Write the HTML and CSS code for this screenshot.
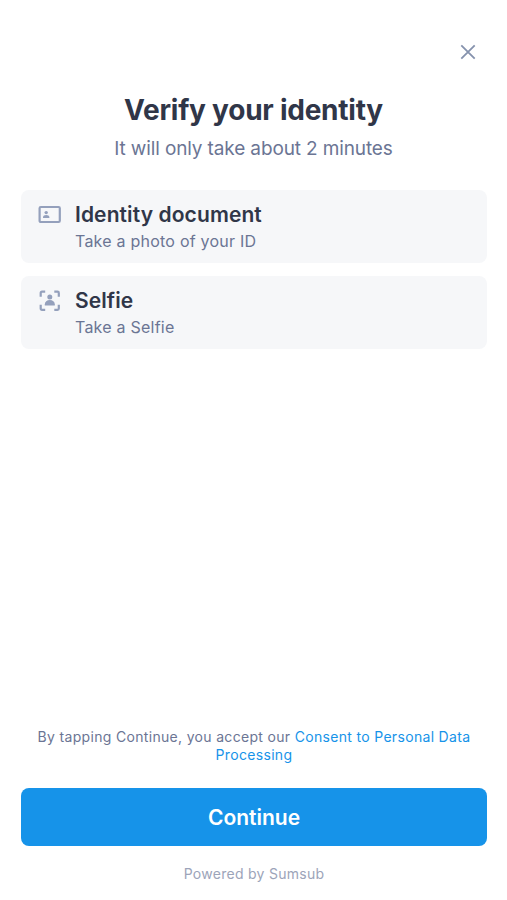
FILE: index.html
```html
<!DOCTYPE html>
<html lang="en">
<head>
<meta charset="utf-8">
<title>Verify your identity</title>
<link rel="stylesheet" href="styles.css">
</head>
<body>
<main class="screen">
  <header class="top">
    <button class="close" aria-label="Close"><svg width="16" height="16" viewBox="0 0 16 16"><path d="M1.300 1.300l13.400 13.400M14.700 1.300l-13.400 13.400"/></svg></button>
  </header>
  <h1 class="title">Verify your identity</h1>
  <p class="subtitle">It will only take about 2 minutes</p>
  <ul class="steps">
    <li class="step">
      <svg class="icon" width="24" height="24" viewBox="0 0 24 24"><rect class="line" x="1.600" y="4" width="20.200" height="15" rx="1.200"/><circle cx="8.200" cy="9.600" r="1.700"/><path d="M5 15v-.6c0-1.500 1.500-2.300 3.200-2.300s3.200.8 3.200 2.300v.6z"/></svg>
      <div><h2 class="name">Identity document</h2><p class="hint">Take a photo of your ID</p></div>
    </li>
    <li class="step">
      <svg class="icon" width="24" height="24" viewBox="0 0 24 24"><path class="line" d="M2.700 7.700V4Q2.700 2.700 4 2.700h3.200M16.300 2.700h3.200Q20.800 2.700 20.800 4v3.700M20.800 15.800v3.700Q20.800 20.800 19.500 20.800h-3.200M7.200 20.800H4Q2.700 20.800 2.700 19.500v-3.700"/><circle cx="11.800" cy="8" r="2.500"/><path d="M6.800 16.500v-1.200c0-2.600 2.200-4.200 5-4.200s5 1.600 5 4.200v1.200z"/></svg>
      <div><h2 class="name">Selfie</h2><p class="hint">Take a Selfie</p></div>
    </li>
  </ul>
  <footer class="bottom">
    <p class="consent">By tapping Continue, you accept our <a>Consent to Personal Data<br>Processing</a></p>
    <button class="continue">Continue</button>
    <p class="powered">Powered by Sumsub</p>
  </footer>
</main>
</body>
</html>
```
FILE: styles.css
```css
* { box-sizing: border-box; margin: 0; padding: 0; }
body { background: #fff; font-family: Inter, sans-serif; }
.screen { height: 900px; padding: 40px 20px 0 21px; display: flex; flex-direction: column; }
.top { display: flex; justify-content: flex-end; height: 24px; }
.close { width: 24px; height: 24px; margin-right: 7px; border: 0; background: none; display: grid; place-items: center; }
.close path { stroke: #8592ad; stroke-width: 1.8; }
.title { margin: 28px 1px 0 0; font-size: 28px; line-height: 36px; font-weight: 700; letter-spacing: -0.24px; text-align: center; color: #303648; }
.subtitle { margin: 8px 1px 0 0; font-size: 19px; line-height: 26px; letter-spacing: -0.13px; text-align: center; color: #6b7594; }
.steps { list-style: none; display: grid; gap: 13px; margin-top: 28px; }
.step { display: flex; gap: 13px; height: 73px; padding: 12px 17px; border-radius: 8px; background: #f6f7f9; }
.icon { flex: none; margin-top: 1px; color: #94a0bc; fill: currentColor; }
.line { fill: none; stroke: currentColor; stroke-width: 2.2; }
.name { font-size: 21px; line-height: 26px; font-weight: 600; letter-spacing: 0.1px; color: #303648; }
.hint { margin-top: 0.5px; font-size: 16px; line-height: 24px; letter-spacing: 0.23px; color: #6b7594; }
.bottom { margin-top: auto; text-align: center; padding-bottom: 16px; }
.consent { font-size: 14px; line-height: 18px; letter-spacing: 0.32px; color: #6b7594; }
.consent a { color: #1693e9; }
.continue { display: block; width: 100%; height: 58px; margin-top: 24px; border: 0; border-radius: 8px; background: #1693e9; color: #fff; font: 600 21px Inter, sans-serif; }
.powered { margin-top: 18px; font-size: 14px; line-height: 20px; letter-spacing: 0.28px; color: #9ca4b9; }
```
